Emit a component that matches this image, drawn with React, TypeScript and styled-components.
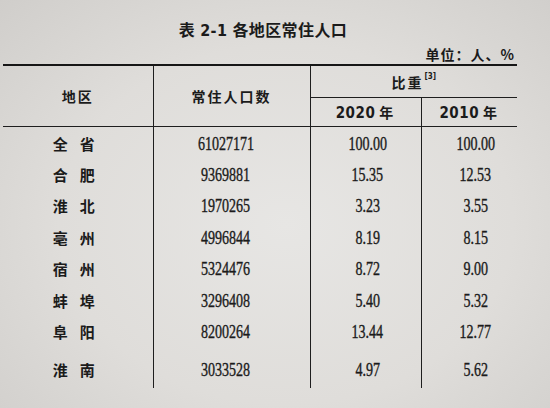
import React from "react";
import styled, { createGlobalStyle } from "styled-components";

const Global = createGlobalStyle`
  html, body { margin: 0; padding: 0; }
  body { background: #d9d7d4; }
`;

const Page = styled.div`
  width: 550px;
  height: 408px;
  overflow: hidden;
  box-sizing: border-box;
  padding: 19px 33px 0 3px;
  background: radial-gradient(ellipse 75% 80% at 52% 55%, #e7e6e4 0%, #dfddda 55%, #cfcdca 100%);
  color: #1b1b1b;
  font-family: "Noto Sans CJK SC", "DejaVu Sans", sans-serif;
`;

const Title = styled.h1`
  margin: 0;
  text-align: center;
  font-size: 16px;
  line-height: 20px;
  font-weight: 700;
  padding-left: 6px;
  letter-spacing: 0.4px;
`;

const TitleNo = styled.span`
  font-family: "DejaVu Sans Condensed", "DejaVu Sans", sans-serif;
  font-stretch: condensed;
  font-weight: 700;
  margin: 0 5px;
`;

const Unit = styled.div`
  margin-top: 5px;
  text-align: right;
  font-size: 14px;
  line-height: 16px;
  font-weight: 700;
  letter-spacing: 1px;
  padding-right: 2px;
`;

const Table = styled.table`
  margin-top: 2px;
  width: 514px;
  border-collapse: collapse;
  table-layout: fixed;
  border-top: 2.5px solid #161616;
`;

const HeadCell = styled.th<{ $bottom?: boolean; $right?: boolean; $h: number }>`
  height: ${(p) => p.$h}px;
  padding: 0;
  font-weight: 700;
  font-size: 14px;
  text-align: center;
  vertical-align: middle;
  border-right: ${(p) => (p.$right ? "1.5px solid #1e1e1e" : "none")};
  border-bottom: ${(p) => (p.$bottom ? "1.5px solid #1e1e1e" : "none")};
  letter-spacing: 2px;
`;

const Sup = styled.sup`
  font-family: "DejaVu Sans Condensed", "DejaVu Sans", sans-serif;
  font-size: 8px;
  letter-spacing: 0;
  position: relative;
  top: -3px;
  margin-left: 1px;
`;

const Year = styled.span`
  font-family: "DejaVu Sans Condensed", "DejaVu Sans", sans-serif;
  font-stretch: condensed;
  font-size: 15px;
  letter-spacing: 0.5px;
  margin-right: 4px;
`;

const Cell = styled.td<{ $right?: boolean; $last?: boolean }>`
  height: ${(p) => (p.$last ? 41 : 31.5)}px;
  padding: ${(p) => (p.$last ? "10px 0 0" : "0")};
  box-sizing: border-box;
  text-align: center;
  vertical-align: ${(p) => (p.$last ? "top" : "middle")};
  border-right: ${(p) => (p.$right ? "1.5px solid #1e1e1e" : "none")};
`;

const Region = styled.span`
  display: inline-block;
  font-size: 15px;
  line-height: 18px;
  font-weight: 700;
  letter-spacing: 12px;
  margin-left: 4px;
`;

const Num = styled.span<{ $dx?: number }>`
  display: inline-block;
  font-family: "Liberation Serif", "Times New Roman", serif;
  font-size: 18px;
  line-height: 18px;
  transform: scaleX(0.78);
  position: relative;
  left: ${(p) => p.$dx ?? 0}px;
  -webkit-text-stroke: 0.35px #1b1b1b;
`;

const rows: [string, string, string, string][] = [
  ["全省", "61027171", "100.00", "100.00"],
  ["合肥", "9369881", "15.35", "12.53"],
  ["淮北", "1970265", "3.23", "3.55"],
  ["亳州", "4996844", "8.19", "8.15"],
  ["宿州", "5324476", "8.72", "9.00"],
  ["蚌埠", "3296408", "5.40", "5.32"],
  ["阜阳", "8200264", "13.44", "12.77"],
  ["淮南", "3033528", "4.97", "5.62"],
];

export default function App() {
  return (
    <>
      <Global />
      <Page>
        <Title>
          表<TitleNo>2-1</TitleNo>各地区常住人口
        </Title>
        <Unit>单位：人、%</Unit>
        <Table>
          <colgroup>
            <col style={{ width: 150 }} />
            <col style={{ width: 157 }} />
            <col style={{ width: 111 }} />
            <col style={{ width: 96 }} />
          </colgroup>
          <thead>
            <tr>
              <HeadCell rowSpan={2} $h={58} $right $bottom>
                地区
              </HeadCell>
              <HeadCell rowSpan={2} $h={58} $right $bottom>
                常住人口数
              </HeadCell>
              <HeadCell colSpan={2} $h={31} $bottom>
                比重<Sup>[3]</Sup>
              </HeadCell>
            </tr>
            <tr>
              <HeadCell $h={28} $right $bottom>
                <Year>2020</Year>年
              </HeadCell>
              <HeadCell $h={28} $bottom>
                <Year>2010</Year>年
              </HeadCell>
            </tr>
          </thead>
          <tbody>
            {rows.map((r, i) => {
              const last = i === rows.length - 1;
              return (
                <tr key={r[0]}>
                  <Cell $right $last={last}>
                    <Region>{r[0]}</Region>
                  </Cell>
                  <Cell $right $last={last}>
                    <Num $dx={-6}>{r[1]}</Num>
                  </Cell>
                  <Cell $right $last={last}>
                    <Num $dx={2}>{r[2]}</Num>
                  </Cell>
                  <Cell $last={last}>
                    <Num $dx={6}>{r[3]}</Num>
                  </Cell>
                </tr>
              );
            })}
          </tbody>
        </Table>
      </Page>
    </>
  );
}
